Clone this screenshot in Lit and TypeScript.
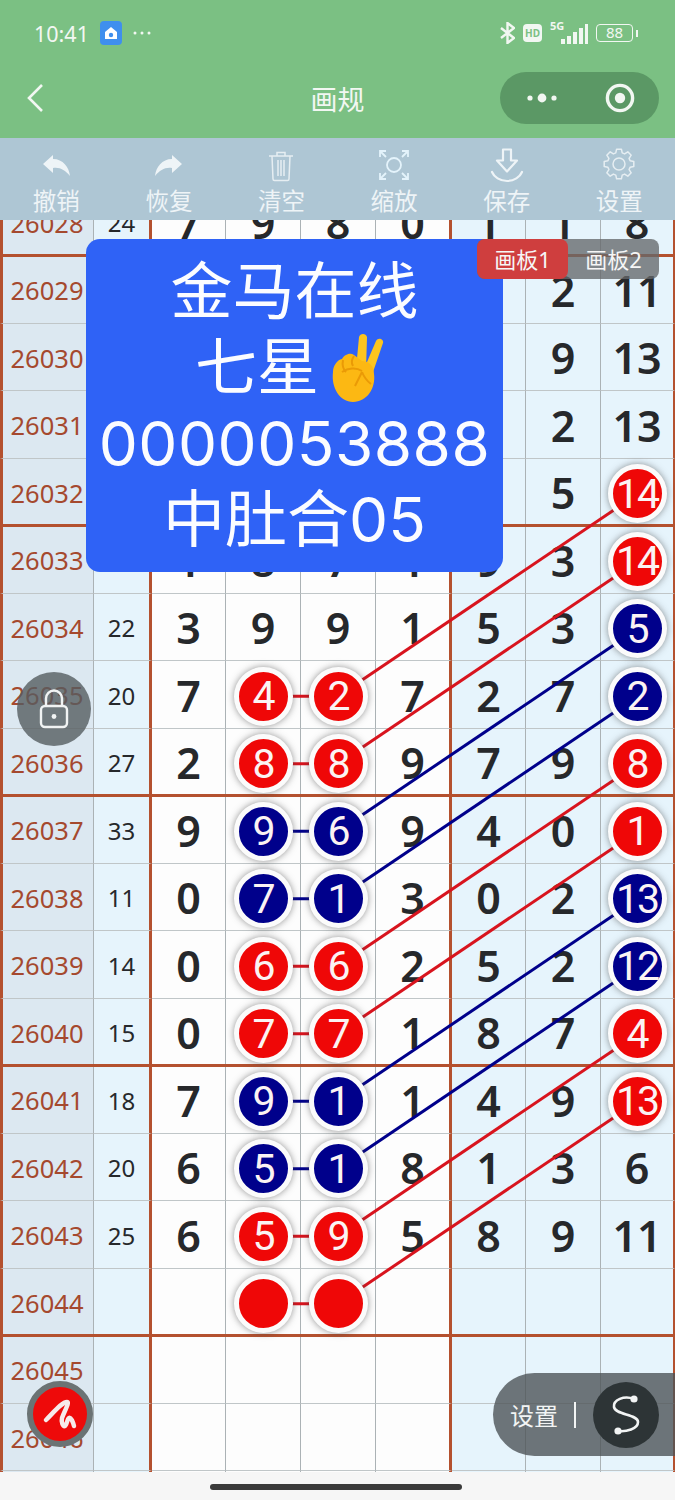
import { LitElement, html, css, svg } from 'lit';
import { customElement } from 'lit/decorators.js';

type Ball = [number, 'r' | 'b'];
type Cell = number | '' | Ball;

// one entry per row: issue, sum, then the seven draw columns.
// cells that lie fully under the popup stay empty
const rows: [number | '', number | '', Cell[]][] = [
  [26028, 24, [7, 9, 8, 0, 1, 1, 8]],
  [26029, '', ['', '', '', '', '', 2, 11]],
  [26030, '', ['', '', '', '', '', 9, 13]],
  [26031, '', ['', '', '', '', '', 2, 13]],
  [26032, '', ['', '', '', '', '', 5, [14, 'r']]],
  [26033, '', [1, 8, 7, 1, 9, 3, [14, 'r']]],
  [26034, 22, [3, 9, 9, 1, 5, 3, [5, 'b']]],
  [26035, 20, [7, [4, 'r'], [2, 'r'], 7, 2, 7, [2, 'b']]],
  [26036, 27, [2, [8, 'r'], [8, 'r'], 9, 7, 9, [8, 'r']]],
  [26037, 33, [9, [9, 'b'], [6, 'b'], 9, 4, 0, [1, 'r']]],
  [26038, 11, [0, [7, 'b'], [1, 'b'], 3, 0, 2, [13, 'b']]],
  [26039, 14, [0, [6, 'r'], [6, 'r'], 2, 5, 2, [12, 'b']]],
  [26040, 15, [0, [7, 'r'], [7, 'r'], 1, 8, 7, [4, 'r']]],
  [26041, 18, [7, [9, 'b'], [1, 'b'], 1, 4, 9, [13, 'r']]],
  [26042, 20, [6, [5, 'b'], [1, 'b'], 8, 1, 3, 6]],
  [26043, 25, [6, [5, 'r'], [9, 'r'], 5, 8, 9, 11]],
  [26044, '', ['', [0, 'r'], [0, 'r'], '', '', '', '']],
  [26045, '', ['', '', '', '', '', '', '']],
  [26046, '', ['', '', '', '', '', '', '']],
  ['', '', ['', '', '', '', '', '', '']],
];

const RED = '#d8141e';
const BLUE = '#00008b';
const ROW = 67.5;

// row index of the left pair, colour of its links
const links: [number, string][] = [
  [7, RED], [8, RED], [9, BLUE], [10, BLUE], [11, RED], [12, RED],
  [13, BLUE], [14, BLUE], [15, RED], [16, RED],
];

const tools = ['撤销', '恢复', '清空', '缩放', '保存', '设置'];

function gearPath() {
  const pts: string[] = [];
  for (let i = 0; i < 8; i++) {
    const a = (i * Math.PI) / 4;
    [[-0.28, 11.6], [-0.16, 15], [0.16, 15], [0.28, 11.6]].forEach(([d, r]) => {
      pts.push(`${(18 + r * Math.sin(a + d)).toFixed(1)} ${(17 - r * Math.cos(a + d)).toFixed(1)}`);
    });
  }
  return `M${pts.join('L')}Z`;
}

const toolIcons = [
  svg`<path d="M5 17 15 8v4c10 0 16 8 17 17-5-6-10-9-17-8v5z" fill="#eef4f7"/>`,
  svg`<path d="M31 17 21 8v4C11 12 5 20 4 29c5-6 10-9 17-8v5z" fill="#eef4f7"/>`,
  svg`<g fill="none" stroke="#e6eef2" stroke-width="1.5"><path d="M6 9h24M14 9V5.500h8V9M9 9l1 23a1.500 1.500 0 0 0 1.500 1.500h13a1.500 1.500 0 0 0 1.500-1.500l1-23M15 13v16M18 13v16M21 13v16"/></g>`,
  svg`<g fill="none" stroke="#e4f3fb" stroke-width="1.800"><circle cx="18" cy="18" r="7"/><path d="M4 10V4h6M26 4h6v6M32 26v6h-6M10 32H4v-6M5 5l5 5M31 5l-5 5M31 31l-5-5M5 31l5-5"/></g>`,
  svg`<g fill="none" stroke="#eef4f7" stroke-width="2.200" stroke-linecap="round" stroke-linejoin="round"><path d="M14 2.500h8v11h6L18 24.500 8 13.500h6zM3 25c2 5 8 9 15 9s13-4 15-9"/></g>`,
  svg`<g fill="none" stroke="#e6eef2" stroke-width="1.500" stroke-linejoin="round"><circle cx="18" cy="17" r="6"/><path d=${gearPath()}/></g>`,
];

@customElement('app-root')
export class AppRoot extends LitElement {
  renderCell(c: Cell, i: number) {
    const side = i >= 4 ? 'cell tint' : 'cell';
    if (Array.isArray(c)) {
      return html`<div class=${side}>
        <span class="ball ${c[1]}">${c[0] === 0 ? '' : c[0]}</span>
      </div>`;
    }
    return html`<div class=${side}>${c}</div>`;
  }

  renderLinks() {
    const y = (r: number) => r * ROW + ROW / 2 + 1;
    return html`<svg class="links" width="675" height="1290" viewBox="0 0 675 1290">
      ${links.map(([r, color]) => svg`
        <line x1="263" y1=${y(r)} x2="338" y2=${y(r)} stroke=${color} stroke-width="3"/>
        <line x1="338" y1=${y(r)} x2="638" y2=${y(r - 3)} stroke=${color} stroke-width="3"/>
      `)}
    </svg>`;
  }

  render() {
    return html`
      <header class="top">
        <div class="status">
          <div class="status-left">
            <span>10:41</span>
            <svg class="app-badge" width="22" height="24" viewBox="0 0 22 24">
              <rect width="22" height="24" rx="4" fill="#3f8fee"/>
              <path d="M11 6l6 5v7H5v-7z" fill="#fff"/>
              <circle cx="11" cy="14" r="2.200" fill="#3f8fee"/>
            </svg>
            <svg class="more" width="18" height="4" viewBox="0 0 18 4" fill="#f2f7f2">
              <circle cx="2" cy="2" r="1.500"/><circle cx="9" cy="2" r="1.500"/><circle cx="16" cy="2" r="1.500"/>
            </svg>
          </div>
          <div class="status-right">
            <svg width="15" height="22" viewBox="0 0 15 22" fill="none" stroke="#f2f7f2" stroke-width="2.400">
              <path d="M1 6l13 10-6.500 5V1L14 6 1 16"/>
            </svg>
            <span class="hd">HD</span>
            <div class="signal">
              <span class="five-g">5G</span>
              <svg width="27" height="21" viewBox="0 0 27 21" fill="#f2f7f2">
                <rect x="0" y="15" width="4" height="5"/><rect x="6" y="12" width="4" height="8"/>
                <rect x="12" y="8" width="4" height="12"/><rect x="18" y="4" width="4" height="16"/>
                <rect x="24" y="0" width="3" height="20"/>
              </svg>
            </div>
            <div class="battery"><span>88</span></div>
            <i class="battery-tip"></i>
          </div>
        </div>
        <div class="nav">
          <svg class="back" width="18" height="30" viewBox="0 0 18 30" fill="none" stroke="#f2f7f2" stroke-width="2.600">
            <path d="M16 2 3 15l13 13"/>
          </svg>
          <div class="nav-title">画规</div>
          <div class="capsule">
            <svg width="36" height="12" viewBox="0 0 36 12" fill="#f2f7f2">
              <circle cx="6" cy="6" r="2.600"/><circle cx="18" cy="6" r="4.400"/><circle cx="30" cy="6" r="2.600"/>
            </svg>
            <svg width="30" height="30" viewBox="0 0 30 30">
              <circle cx="15" cy="15" r="12.600" fill="none" stroke="#f2f7f2" stroke-width="3.400"/>
              <circle cx="15" cy="15" r="5.200" fill="#f2f7f2"/>
            </svg>
          </div>
        </div>
      </header>

      <nav class="toolbar">
        ${tools.map(
          (t, i) => html`<div class="tool">
            <svg width="36" height="36" viewBox="0 0 36 36">${toolIcons[i]}</svg>
            <span>${t}</span>
          </div>`
        )}
      </nav>

      <main class="viewport">
        <div class="board">
          ${rows.map(
            ([issue, sum, cells], r) => html`<div class="row ${(r + 3) % 4 === 0 ? 'group' : ''}">
              <div class="cell issue">${issue}</div>
              <div class="cell sum">${sum}</div>
              ${cells.map((c, i) => this.renderCell(c, i))}
            </div>`
          )}
          ${this.renderLinks()}
        </div>

        <div class="popup">
          <div>金马在线</div>
          <div class="star-line">
            七星
            <svg class="victory" width="60" height="72" viewBox="0 0 60 72">
              <path d="M33 5c1-4 7-4 8 0l-1 32H30z" fill="#fdc51f"/>
              <path d="M50 9c2-4 8-2 7 2L47 40l-9-3z" fill="#fdc51f"/>
              <path d="M7 40c0-6 4-12 9-13 2-4 8-7 12-4l8 6c7 0 12 5 12 13 2 14-7 28-21 28C14 70 5 56 7 40z" fill="#fcb813"/>
              <path d="M17 28c-1 5 0 9 3 12M28 24c-2 3-3 7-1 10M16 40c6-4 14-5 20-1M36 40l-7 14M36 40c2 5 5 9 9 12" fill="none" stroke="#ea9a06" stroke-width="2"/>
            </svg>
          </div>
          <div class="digits">0000053888</div>
          <div>中肚合05</div>
        </div>

        <div class="tabs">
          <span class="tab on">画板1</span>
          <span class="tab">画板2</span>
        </div>

        <div class="lock">
          <svg width="30" height="40" viewBox="0 0 30 40" fill="none" stroke="#f1f3f3" stroke-width="2.400">
            <path d="M7 17V9.500a8 8 0 0 1 16 0V17"/>
            <rect x="2" y="17" width="26" height="21" rx="4"/>
            <circle cx="15" cy="27.500" r="2.400" fill="#f1f3f3" stroke="none"/>
          </svg>
        </div>

        <div class="pen">
          <svg width="48" height="48" viewBox="0 0 48 48" fill="none" stroke="#f7eaea" stroke-width="4.500" stroke-linecap="round" stroke-linejoin="round">
            <path d="M10 30C18 22 26 12 31 12c3 0-3 10-5 16-1 4 1 9 3 8s2-7 4-8 4 4 5 8"/>
          </svg>
        </div>

        <div class="float-set">
          <span>设置</span>
          <i class="sep"></i>
          <div class="s-btn">
            <svg width="40" height="48" viewBox="0 0 40 48" fill="none" stroke="#f2f4f4" stroke-width="2.600" stroke-linecap="round">
              <path d="M28 8C18 4 7 9 8 16c1 8 24 7 24 15 0 7-12 10-20 9"/>
              <circle cx="28" cy="8" r="3.600" fill="#f2f4f4" stroke="none"/>
              <circle cx="12" cy="40" r="3.600" fill="#f2f4f4" stroke="none"/>
            </svg>
          </div>
        </div>
      </main>

      <footer class="home-bar"><i></i></footer>
    `;
  }

  static styles = css`
    :host {
      display: block;
      width: 675px;
      height: 1500px;
      overflow: hidden;
      background: #f6f6f6;
      font-family: 'Noto Sans', 'Noto Sans CJK SC', sans-serif;
    }

    .top {
      height: 138px;
      background: #7bc083;
      color: #f2f7f2;
      box-sizing: border-box;
      padding: 18px 37px 0 34px;
    }

    .status {
      height: 30px;
      display: flex;
      align-items: center;
      justify-content: space-between;
    }

    .status-left {
      display: flex;
      align-items: center;
      gap: 11px;
      font-size: 21.5px;
    }

    .status-right {
      display: flex;
      align-items: center;
      gap: 8px;
    }

    .hd {
      width: 19px;
      height: 18px;
      background: #f2f7f2;
      color: #7bc083;
      font-size: 10px;
      font-weight: 700;
      border-radius: 4px;
      line-height: 18px;
      text-align: center;
    }

    .signal {
      position: relative;
      width: 38px;
      height: 24px;
      display: flex;
      align-items: flex-end;
      justify-content: flex-end;
    }

    .five-g {
      position: absolute;
      top: -3px;
      left: 0;
      font-size: 11px;
      font-weight: 700;
    }

    .battery {
      width: 37px;
      height: 18px;
      box-sizing: border-box;
      border: 1.6px solid #f2f7f2;
      border-radius: 4px;
      font-size: 15px;
      line-height: 15px;
      text-align: center;
    }

    .battery-tip {
      width: 2px;
      height: 7px;
      background: #f2f7f2;
      margin-left: -5px;
    }

    .nav {
      height: 100px;
      display: grid;
      grid-template-columns: 1fr auto 1fr;
      align-items: center;
      margin: 0 -21px 0 -8px;
    }

    .nav-title {
      font-size: 27px;
      margin-left: -10px;
    }

    .capsule {
      justify-self: end;
      width: 159px;
      height: 52px;
      box-sizing: border-box;
      padding: 0 24px;
      border-radius: 26px;
      background: #5b9865;
      display: flex;
      align-items: center;
      justify-content: space-between;
    }

    .toolbar {
      height: 82px;
      background: #aec6d4;
      display: grid;
      grid-template-columns: repeat(6, 112.6px);
    }

    .tool {
      display: flex;
      flex-direction: column;
      align-items: center;
      color: #eef4f7;
      font-size: 23.5px;
      line-height: 28px;
      padding-top: 9px;
    }

    .tool span {
      margin-top: 4px;
    }

    .viewport {
      position: relative;
      height: 1252px;
      overflow: hidden;
    }

    .board {
      position: relative;
      margin-top: -31.5px;
    }

    .row {
      position: relative;
      display: grid;
      grid-template-columns: 94px 58px 74px 75px 75px 76px 74px 75px 74px;
      height: 67.5px;
    }

    .row.group::before {
      content: '';
      position: absolute;
      z-index: 1;
      left: 0;
      right: 0;
      top: -2px;
      height: 3px;
      background: #b4512f;
    }

    .cell {
      display: flex;
      align-items: center;
      justify-content: center;
      box-sizing: border-box;
      padding-top: 1.5px;
      background: #fdfdfd;
      border-right: 1.5px solid #abb2b5;
      border-bottom: 1.5px solid #c0c6c8;
      color: #26282b;
      font-size: 43px;
      font-weight: 600;
      position: relative;
    }

    .cell.tint {
      background: #e6f4fc;
    }

    .cell.issue {
      background: #dce8f1;
      color: #a5492e;
      font-size: 25.5px;
      font-weight: 400;
      padding-right: 2px;
      border-left: 3px solid #b4512f;
    }

    .cell.sum {
      background: #e6f4fc;
      font-size: 24px;
      font-weight: 400;
      border-right: 3px solid #b4512f;
    }

    .row > .cell:nth-child(6) {
      border-right: 3px solid #b4512f;
    }

    .row > .cell:last-child {
      border-right: 2px solid #b4512f;
    }

    .ball {
      position: relative;
      z-index: 2;
      box-sizing: border-box;
      flex: none;
      width: 59px;
      height: 59px;
      margin-top: 2px;
      border-radius: 50%;
      border: 5px solid #fbfbfb;
      box-shadow: 0 0 7px rgba(60, 60, 60, 0.55);
      color: #fbf3f3;
      font-family: Roboto, sans-serif;
      font-size: 41px;
      font-weight: 400;
      display: flex;
      align-items: center;
      justify-content: center;
      letter-spacing: -2px;
    }

    .ball.r {
      background: #ef0707;
    }

    .ball.b {
      background: #00008b;
    }

    .links {
      position: absolute;
      top: 0;
      left: 0;
      z-index: 1;
      pointer-events: none;
    }

    .popup {
      position: absolute;
      z-index: 5;
      left: 86px;
      top: 19px;
      width: 417px;
      height: 333px;
      box-sizing: border-box;
      padding-top: 15px;
      border-radius: 14px;
      background: #2f62f6;
      color: #fbfcff;
      font-family: Inter, 'Noto Sans CJK SC', sans-serif;
      font-size: 62px;
      line-height: 76px;
      text-align: center;
    }

    .star-line {
      height: 76px;
      display: flex;
      align-items: center;
      justify-content: center;
      gap: 7px;
      padding-right: 8px;
    }

    .digits {
      letter-spacing: 0.5px;
    }

    .tabs {
      position: absolute;
      z-index: 6;
      left: 477px;
      top: 19px;
      width: 182px;
      height: 40px;
      display: flex;
      border-radius: 8px;
      background: rgba(100, 104, 106, 0.78);
    }

    .tab {
      flex: 1;
      color: #f6f6f6;
      font-size: 22px;
      line-height: 40px;
      text-align: center;
    }

    .tab.on {
      background: #cf3e3e;
      border-radius: 8px;
    }

    .lock {
      position: absolute;
      z-index: 6;
      left: 17px;
      top: 452px;
      width: 74px;
      height: 74px;
      border-radius: 50%;
      background: rgba(85, 92, 96, 0.8);
      display: flex;
      align-items: center;
      justify-content: center;
    }

    .pen {
      position: absolute;
      z-index: 6;
      left: 27px;
      top: 1161px;
      width: 66px;
      height: 66px;
      box-sizing: border-box;
      border: 6px solid #6b7374;
      border-radius: 50%;
      background: #ee0a0a;
      display: flex;
      align-items: center;
      justify-content: center;
    }

    .float-set {
      position: absolute;
      z-index: 6;
      right: 0;
      top: 1153px;
      width: 182px;
      height: 83px;
      box-sizing: border-box;
      padding-left: 17px;
      border-radius: 42px 0 0 42px;
      background: rgba(78, 84, 88, 0.8);
      color: #f2f4f4;
      font-size: 24px;
      display: flex;
      align-items: center;
    }

    .sep {
      width: 1.5px;
      height: 26px;
      margin-left: 16px;
      background: #f2f4f4;
    }

    .s-btn {
      width: 66px;
      height: 66px;
      margin-left: 17px;
      border-radius: 50%;
      background: #2d3436;
      display: flex;
      align-items: center;
      justify-content: center;
    }

    .home-bar {
      height: 28px;
      box-sizing: border-box;
      padding-top: 12px;
      display: flex;
      justify-content: center;
    }

    .home-bar i {
      width: 252px;
      height: 6px;
      border-radius: 3px;
      background: #3a3a3a;
      margin-right: 3px;
    }
  `;
}
